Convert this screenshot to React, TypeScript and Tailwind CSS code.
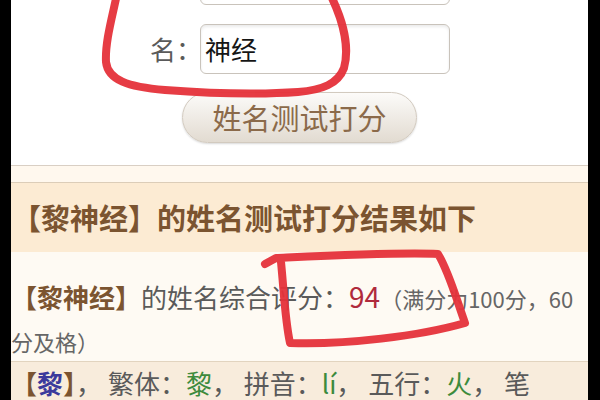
const cjk = { fontFamily: '"Noto Sans CJK SC", "Noto Sans", sans-serif' };

function NameRow({ label, value, className }: { label?: string; value?: string; className?: string }) {
  return (
    <div className={`flex items-center pl-[139px] ${className ?? ""}`}>
      <span className="w-[50px] whitespace-nowrap text-[26px] text-[#5a5a5a] leading-none">{label}</span>
      <div className="w-[250px] h-[50px] flex items-center pl-[4px] border border-[#c9c3bb] rounded-[6px] bg-white shadow-[inset_0_2px_3px_rgba(0,0,0,0.08)]">
        <span className="text-[26px] text-[#151515] leading-none">{value}</span>
      </div>
    </div>
  );
}

function Annotations() {
  // hand-drawn red marks over the screenshot
  return (
    <svg className="absolute inset-0 pointer-events-none" width="600" height="400" viewBox="0 0 600 400">
      <g fill="none" stroke="#e5313a" strokeWidth="8" strokeLinecap="round" strokeLinejoin="round" opacity="0.95">
        <path d="M117 -6 C112 18 105 42 106 62 C108 80 128 87 165 90 C205 93 255 95 298 92 C322 90 338 84 344 68 C349 50 345 24 330 -6" />
        <path d="M265 264 L276 258 C320 256 400 252 438 254 C449 272 456 298 465 323 C420 336 345 345 290 343 C285 320 284 292 281 262" />
      </g>
    </svg>
  );
}

export default function App() {
  return (
    <div className="relative w-[600px] h-[400px] overflow-hidden bg-black flex" style={cjk}>
      <div className="ml-[11px] w-[577px] h-full bg-white flex flex-col">
        {/* form */}
        <div className="h-[165px] flex flex-col shrink-0">
          <NameRow className="mt-[-45px]" />
          <NameRow label="名：" value="神经" className="mt-[19px]" />
          <div className="mt-[18px] flex justify-center">
            <button className="w-[235px] h-[51px] rounded-full border border-[#d2cabf] bg-gradient-to-b from-[#fcfbf9] to-[#e2dbd1] shadow-[0_1px_2px_rgba(0,0,0,0.15)] text-[29px] text-[#8b6a4a] leading-none">
              姓名测试打分
            </button>
          </div>
        </div>

        {/* result */}
        <div className="h-[18px] shrink-0 border-t border-b border-t-[#d9cfc4] border-b-[#dccdb8] bg-[#fff8ee]" />
        <div className="h-[69px] shrink-0 flex items-center pl-[1px] bg-[#fcebd3]">
          <h2 className="text-[29px] font-bold text-[#7b5430] leading-none whitespace-nowrap">【黎神经】的姓名测试打分结果如下</h2>
        </div>
        <div className="h-[109px] shrink-0 bg-[#fefaf3] pt-[23px]">
          <p className="text-[26px] leading-[42px] text-[#5a5a5a]">
            <span className="font-bold text-[#7b5430]">【黎神经】</span>的姓名综合评分：
            <span className="text-[28px] text-[#b02a3c]">94</span>
            <span className="text-[22px] text-[#666]">（满分为100分，60分及格）</span>
          </p>
        </div>
        <div className="flex-1 border-t border-[#e2d4bf] bg-[#f8ecdc]">
          <p className="text-[26px] leading-[42px] text-[#5a5a5a] whitespace-nowrap">
            <span className="font-bold text-[#7b5430]">【<span className="text-[#3b3a9c]">黎</span>】</span>，{" "}
            繁体：<span className="text-[#3d8b3d]">黎</span>，{" "}
            拼音：<span className="text-[#3d8b3d]">lí</span>，{" "}
            五行：<span className="text-[#3d8b3d]">火</span>，{" "}
            笔
          </p>
        </div>
      </div>
      <Annotations />
    </div>
  );
}
